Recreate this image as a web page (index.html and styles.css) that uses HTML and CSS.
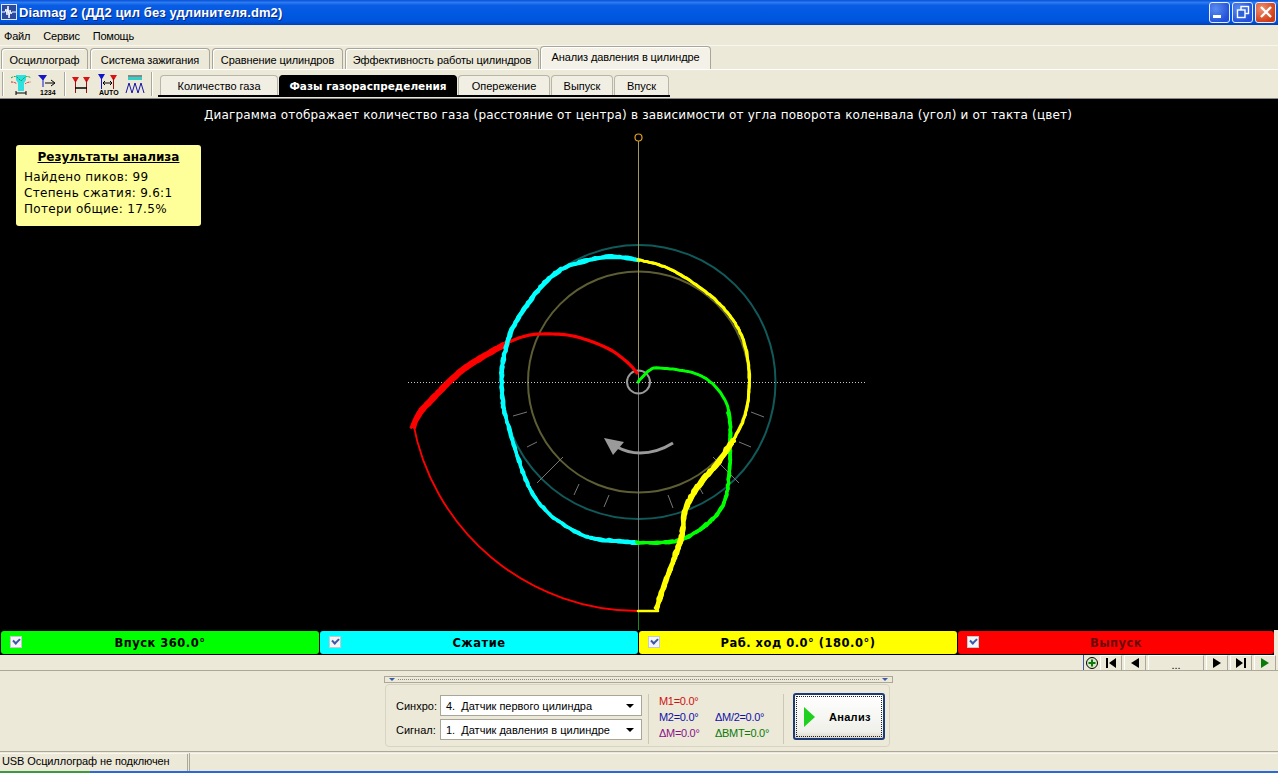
FILE: index.html
```html
<!DOCTYPE html>
<html lang="ru">
<head>
    <meta charset="UTF-8">
    <title>Diamag 2</title>
    <link rel="stylesheet" href="styles.css">
</head>
<body>

<div class="title-bar">
    <svg class="app-icon" width="16" height="16" viewBox="0 0 16 16">
        <rect x="0.5" y="0.5" width="15" height="15" fill="#2a4aa0" stroke="#dfe6ff"/>
        <path d="M1 8h3l1-3 1 6 1-9 1 12 1-8 1 4 1-2h4" fill="none" stroke="#fff"/>
    </svg>
    <span class="title-text">Diamag 2 (ДД2 цил без удлинителя.dm2)</span>
    <div class="win-buttons">
        <div class="win-btn"><span class="min-glyph"></span></div>
        <div class="win-btn">
            <svg width="14" height="14" viewBox="0 0 14 14" fill="none" stroke="#fff" stroke-width="1.4">
                <rect x="5" y="1.5" width="7.5" height="7"/>
                <rect x="1.5" y="5" width="7.5" height="7.5" fill="#2b62dc"/>
            </svg>
        </div>
        <div class="win-btn close">
            <svg width="14" height="14" viewBox="0 0 14 14" stroke="#fff" stroke-width="2.4">
                <path d="M2 2l10 10M12 2L2 12"/>
            </svg>
        </div>
    </div>
</div>

<div class="menu-bar">
    <span>Файл</span>
    <span>Сервис</span>
    <span>Помощь</span>
</div>

<div class="main-tabs">
    <div class="tab">Осциллограф</div>
    <div class="tab">Система зажигания</div>
    <div class="tab">Сравнение цилиндров</div>
    <div class="tab">Эффективность работы цилиндров</div>
    <div class="tab active">Анализ давления в цилиндре</div>
</div>

<div class="sub-row">
    <div class="toolbar">
        <span class="sep"></span>
        <svg class="tool-icon first" width="22" height="24" viewBox="0 0 22 24">
            <path d="M6 3h10v5l-2 3v8H8v-8L6 8z" fill="#2fe0e0"/>
            <path d="M1 6q4-3 7 0l3 3 3-3q3-3 7 0" fill="none" stroke="#1a9a3a" stroke-dasharray="2 1"/>
            <path d="M1 10q4 0 6 2M15 12q2-2 6-2" fill="none" stroke="#d02020" stroke-dasharray="2 1"/>
            <path d="M6 21h10M6 19v4M16 19v4" stroke="#000" fill="none"/>
        </svg>
        <svg class="tool-icon" width="20" height="24" viewBox="0 0 20 24">
            <path d="M0 3h9L5.500 8H4.500z" fill="#1414c8"/>
            <path d="M5 7v8" stroke="#1414c8"/>
            <path d="M7 11h9M13 8l4 3-4 3" fill="none" stroke="#000"/>
            <text class="icon-text" x="2" y="23">1234</text>
        </svg>
        <span class="sep"></span>
        <svg class="tool-icon" width="20" height="24" viewBox="0 0 20 24">
            <path d="M1 5h7L5 10H4zM12 5h7l-3 5h-1z" fill="#d81414"/>
            <path d="M4.500 8v13M15.500 8v13" stroke="#a01010"/>
            <path d="M4 16h12" stroke="#000" stroke-width="1.500"/>
        </svg>
        <svg class="tool-icon" width="22" height="24" viewBox="0 0 22 24">
            <path d="M1 2h7L5 7H4z" fill="#1414c8"/>
            <path d="M13 3h7l-3 5h-1z" fill="#d81414"/>
            <path d="M4.500 5v12" stroke="#1414c8"/>
            <path d="M16.500 6v11" stroke="#a01010"/>
            <path d="M6 11h9M8 9l-2 2 2 2M13 9l2 2-2 2" fill="none" stroke="#000"/>
            <text class="icon-text" x="2" y="23">AUTO</text>
        </svg>
        <svg class="tool-icon" width="20" height="24" viewBox="0 0 20 24">
            <rect x="3" y="3" width="14" height="2" fill="#888"/>
            <rect x="3" y="5" width="14" height="3" fill="#2fd0c8"/>
            <path d="M1 21l3-10 3 10 3-10 3 10 3-10 3 10" fill="none" stroke="#1414a8"/>
        </svg>
        <span class="sep"></span>
    </div>
    <div class="sub-tabs">
        <div class="sub-tab">Количество газа</div>
        <div class="sub-tab active">Фазы газораспределения</div>
        <div class="sub-tab">Опережение</div>
        <div class="sub-tab">Выпуск</div>
        <div class="sub-tab">Впуск</div>
    </div>
</div>

<div class="plot">
    <p class="plot-title">Диаграмма отображает количество газа (расстояние от центра) в зависимости от угла поворота коленвала (угол) и от такта (цвет)</p>
    <svg id="chart" class="chart" viewBox="0 98 1278 532" width="1278" height="532">
        <circle cx="638.500" cy="382" r="137" fill="none" stroke="#115a5a" stroke-width="2"/>
        <circle cx="638.500" cy="382" r="110.500" fill="none" stroke="#5e5e34" stroke-width="2"/>
        <line x1="638.500" y1="141" x2="638.500" y2="382" stroke="#9a9a62"/>
        <line x1="638.500" y1="382" x2="638.500" y2="611" stroke="#777"/>
        <line x1="638.500" y1="611" x2="638.500" y2="630" stroke="#1a8a1a"/>
        <line x1="408" y1="382.500" x2="867" y2="382.500" stroke="#c8c8c8" stroke-dasharray="1 2"/>
        <circle cx="638.500" cy="137.500" r="3.500" fill="none" stroke="#e0a020" stroke-width="1.200"/>
        <circle cx="638.500" cy="382" r="11.500" fill="none" stroke="#9a9a9a" stroke-width="2"/>
        <g id="ticks" stroke="#777"></g>
        <path d="M638.500 611A229 229 0 0 1 413 422" fill="none" stroke="#ff0000" stroke-width="1.800"/>
        <g id="traces" fill="none" stroke-linejoin="round" stroke-linecap="round"></g>
        <path d="M673 443Q657 453 640 453Q628 453 617 447" fill="none" stroke="#9a9a9a" stroke-width="3"/>
        <path d="M604 438L624 442L613 455z" fill="#9a9a9a"/>
    </svg>
    <div class="results">
        <div class="results-head">Результаты анализа</div>
        <div>Найдено пиков: 99</div>
        <div>Степень сжатия: 9.6:1</div>
        <div>Потери общие: 17.5%</div>
    </div>
</div>

<div class="legend">
    <div class="legend-item green"><span class="check"></span>Впуск 360.0°</div>
    <div class="legend-item cyan"><span class="check"></span>Сжатие</div>
    <div class="legend-item yellow"><span class="check"></span>Раб. ход 0.0° (180.0°)</div>
    <div class="legend-item red"><span class="check"></span><span class="dim">Выпуск</span></div>
</div>

<div class="nav-row">
    <div class="nav-add">
        <svg width="14" height="14" viewBox="0 0 14 14">
            <circle cx="7" cy="7" r="5.500" fill="#d8e8c8" stroke="#000"/>
            <path d="M7 3.500v7M3.500 7h7" stroke="#0a7a0a" stroke-width="2"/>
        </svg>
    </div>
    <div class="nav-btn"><svg width="12" height="10" viewBox="0 0 12 10"><path d="M1 0h2v10H1zM11 0v10L4 5z"/></svg></div>
    <div class="nav-btn"><svg width="10" height="10" viewBox="0 0 10 10"><path d="M9 0v10L1 5z"/></svg></div>
    <div class="nav-btn wide">...</div>
    <div class="nav-btn"><svg width="10" height="10" viewBox="0 0 10 10"><path d="M1 0v10l8-5z"/></svg></div>
    <div class="nav-btn"><svg width="12" height="10" viewBox="0 0 12 10"><path d="M1 0v10l7-5zM9 0h2v10H9z"/></svg></div>
    <div class="nav-btn"><svg width="10" height="10" viewBox="0 0 10 10"><path d="M1 0v10l8-5z" fill="#0a7a0a"/></svg></div>
</div>

<div class="bottom">
    <div class="splitter">
        <span class="split-arrow"></span>
        <span class="split-dots"></span>
        <span class="split-arrow"></span>
    </div>
    <div class="panel">
        <div class="selects">
            <div class="select-row">
                <label>Синхро:</label>
                <div class="select">4.&nbsp; Датчик первого цилиндра<span class="drop"></span></div>
            </div>
            <div class="select-row">
                <label>Сигнал:</label>
                <div class="select">1.&nbsp; Датчик давления в цилиндре<span class="drop"></span></div>
            </div>
        </div>
        <div class="markers">
            <span class="m-red">M1=0.0°</span><span></span>
            <span class="m-blue">M2=0.0°</span><span class="m-blue">ΔM/2=0.0°</span>
            <span class="m-purple">ΔM=0.0°</span><span class="m-green">ΔBMT=0.0°</span>
        </div>
        <div class="run-box">
            <div class="run-btn">
                <svg width="12" height="20" viewBox="0 0 12 20"><path d="M0 0l11 10L0 20z" fill="#20d020"/></svg>
                <span>Анализ</span>
            </div>
        </div>
    </div>
</div>

<div class="status-bar">
    <div class="status-cell first">USB Осциллограф не подключен</div>
    <div class="status-cell"></div>
</div>
<div class="taskbar"><span class="start"></span></div>

<script src="chart.js"></script>
</body>
</html>
```

FILE: styles.css
```css
* {
    box-sizing: border-box;
}

html, body {
    margin: 0;
    padding: 0;
}

body {
    width: 1278px;
    height: 773px;
    overflow: hidden;
    display: flex;
    flex-direction: column;
    background-color: #ece9d8;
    font-family: "Liberation Sans", Arial, sans-serif;
    font-size: 11px;
    color: #000;
}

/* window title */
.title-bar {
    height: 25px;
    display: flex;
    align-items: center;
    padding: 0 2px 1px 1px;
    background: linear-gradient(180deg, #0a50d8 0%, #2a7af0 10%, #0a5ce4 22%, #0058e0 60%, #0054dc 85%, #0040b8 100%);
}

.app-icon {
    margin-right: 2px;
}

.title-text {
    color: #fff;
    font-family: "Liberation Sans", sans-serif;
    font-weight: bold;
    font-size: 13px;
    letter-spacing: 0.1px;
    text-shadow: 1px 1px 0 #0a2a88;
}

.win-buttons {
    margin-left: auto;
    display: flex;
    gap: 2px;
}

.win-btn {
    width: 21px;
    height: 21px;
    display: flex;
    align-items: center;
    justify-content: center;
    border: 1px solid #e8eeff;
    border-radius: 3px;
    background: radial-gradient(circle at 30% 30%, #5a8cf0, #2250d8 75%);
}

.win-btn.close {
    background: radial-gradient(circle at 30% 30%, #f09070, #d03c14 75%);
}

.min-glyph {
    width: 8px;
    height: 3px;
    margin: 8px 6px 0 0;
    background-color: #fff;
}

.menu-bar {
    height: 21px;
    display: flex;
    align-items: center;
    gap: 13px;
    padding: 1px 0 0 4px;
    border-bottom: 1px solid #f8f6ee;
    letter-spacing: -0.2px;
}

/* main tabs */
.main-tabs {
    height: 23px;
    display: grid;
    grid-template-columns: 87px 120px 131px 194px 170px;
    column-gap: 2px;
    padding-left: 1px;
    align-items: end;
    letter-spacing: -0.1px;
}

.tab {
    height: 22px;
    display: flex;
    align-items: center;
    justify-content: center;
    background-color: #ece9d8;
    border: 1px solid #a8a698;
    border-bottom: none;
    border-radius: 4px 4px 0 0;
    box-shadow: inset 1px 1px 0 #fff;
}

.tab.active {
    height: 24px;
    margin-left: -1px;
    background-color: #f4f2e8;
    padding-bottom: 3px;
}

.sub-row {
    height: 29px;
    display: flex;
    border-top: 1px solid #fff;
}

.toolbar {
    width: 158px;
    display: flex;
    align-items: center;
    padding-left: 2px;
}

.tool-icon {
    margin-right: 6px;
}

.tool-icon.first {
    margin: 0 6px 0 0;
}

.sep {
    width: 2px;
    height: 24px;
    margin-right: 5px;
    border-left: 1px solid #aca899;
    border-right: 1px solid #fff;
}

.toolbar .sep:first-child {
    margin-right: 6px;
}

.icon-text {
    font-family: "Liberation Sans", sans-serif;
    font-size: 7px;
    font-weight: bold;
}

.sub-tabs {
    align-self: flex-start;
    margin-top: 5px;
    width: 512px;
    height: 22px;
    display: grid;
    grid-template-columns: 118px 178px 92px 62px 55px;
    column-gap: 1px;
    padding-left: 2px;
    border-bottom: 2px solid #000;
}

.sub-tab {
    display: flex;
    align-items: center;
    justify-content: center;
    padding-top: 1px;
    background-color: #f1efe4;
    border: 1px solid #b8b6a8;
    border-bottom: none;
    border-radius: 4px 4px 0 0;
}

.sub-tab.active {
    background-color: #000;
    border-color: #000;
    color: #fff;
    font-weight: bold;
    font-family: "DejaVu Sans", sans-serif;
    font-size: 10.500px;
}

/* plot */
.plot {
    position: relative;
    height: 532px;
    background-color: #000;
    border-top: 1px solid #888;
}

.plot-title {
    position: absolute;
    top: 9px;
    left: 0;
    width: 100%;
    margin: 0;
    padding-right: 2px;
    text-align: center;
    color: #fff;
    font-family: "DejaVu Sans", sans-serif;
    font-size: 12px;
    letter-spacing: 0.18px;
    white-space: nowrap;
}

.chart {
    position: absolute;
    top: -1px;
    left: 0;
}

.results {
    position: absolute;
    top: 46px;
    left: 16px;
    width: 185px;
    height: 81px;
    padding: 4px 8px;
    background-color: #ffff99;
    border-radius: 3px;
    font-family: "DejaVu Sans", sans-serif;
    font-size: 12px;
    letter-spacing: 0.3px;
    line-height: 16px;
}

.results-head {
    margin-bottom: 4px;
    text-align: center;
    font-weight: bold;
    letter-spacing: 0;
    text-decoration: underline;
}

/* legend */
.legend {
    width: 1274px;
    height: 25px;
    display: grid;
    grid-template-columns: 319px 319px 319px 317px;
    padding: 1px 0;
    background-color: #000;
    font-family: "DejaVu Sans", sans-serif;
    font-weight: bold;
    font-size: 11.500px;
    letter-spacing: 0.5px;
}

.legend-item {
    position: relative;
    display: flex;
    align-items: center;
    justify-content: center;
    margin-left: 1px;
    border-radius: 3px;
}

.green { background-color: #00ff00; }
.cyan { background-color: #00ffff; }
.yellow { background-color: #ffff00; }
.red { background-color: #ff0000; }

.dim {
    color: #6a0a0a;
}

.check {
    position: absolute;
    left: 9px;
    top: 5px;
    width: 12px;
    height: 12px;
    background-color: #f4f4f4;
    border: 1px solid #c4c8d0;
}

.check::after {
    content: "";
    position: absolute;
    left: 2px;
    top: 1px;
    width: 5px;
    height: 3px;
    border-left: 2px solid #3a5aa8;
    border-bottom: 2px solid #3a5aa8;
    transform: rotate(-45deg);
}

/* nav row */
.nav-row {
    height: 16px;
    display: flex;
    justify-content: flex-end;
    gap: 2px;
    padding-right: 2px;
    border-bottom: 1px solid #aca899;
}

.nav-add {
    width: 16px;
    display: flex;
    align-items: center;
    justify-content: center;
    border-left: 1px solid #3a5aa8;
    margin-right: -1px;
}

.nav-btn {
    width: 22px;
    height: 15px;
    display: flex;
    align-items: center;
    justify-content: center;
    border-top: 1px solid #fff;
    border-left: 1px solid #fff;
    border-right: 1px solid #aca899;
    line-height: 10px;
}

.nav-btn.wide {
    width: 56px;
    padding-top: 3px;
}

/* bottom panel */
.bottom {
    height: 79px;
    display: flex;
    flex-direction: column;
    align-items: center;
    padding-top: 5px;
}

.splitter {
    width: 509px;
    height: 7px;
    margin-left: -1px;
    display: flex;
    align-items: center;
    gap: 3px;
    padding: 0 4px;
    border: 1px solid #aca899;
}

.split-arrow {
    width: 0;
    height: 0;
    border-left: 3px solid transparent;
    border-right: 3px solid transparent;
    border-top: 3px solid #3a5aa8;
}

.split-dots {
    flex: 1;
    border-top: 1px dotted #888;
}

.panel {
    width: 505px;
    height: 63px;
    margin: 1px 0 0 -3px;
    display: flex;
    align-items: center;
    padding-left: 10px;
    border: 1px solid #d8d4c4;
    border-radius: 4px;
}

.selects {
    width: 252px;
    display: flex;
    flex-direction: column;
    gap: 3px;
    margin-top: 4px;
    padding-right: 6px;
}

.select-row {
    display: flex;
    align-items: center;
    justify-content: space-between;
}

.select {
    position: relative;
    width: 202px;
    height: 21px;
    padding: 1px 0 0 5px;
    line-height: 18px;
    background-color: #fff;
    border: 1px solid #a8a698;
    white-space: nowrap;
}

.drop {
    position: absolute;
    top: 8px;
    right: 7px;
    width: 0;
    height: 0;
    border-left: 4px solid transparent;
    border-right: 4px solid transparent;
    border-top: 4px solid #000;
}

.markers {
    width: 136px;
    height: 50px;
    margin-top: 6px;
    display: grid;
    grid-template-columns: 56px auto;
    grid-auto-rows: 16px;
    align-content: center;
    padding-left: 10px;
    border-left: 1px solid #ccc8b8;
    border-right: 1px solid #ccc8b8;
    letter-spacing: -0.3px;
    white-space: nowrap;
}

.m-red { color: #d01010; }
.m-blue { color: #1010a8; }
.m-purple { color: #8a108a; }
.m-green { color: #0a7a0a; }

.run-box {
    padding-left: 9px;
    margin-top: 2px;
}

.run-btn {
    width: 92px;
    height: 47px;
    display: flex;
    align-items: center;
    gap: 13px;
    padding-left: 9px;
    background: linear-gradient(180deg, #fff, #f0f0ea 85%, #dcd8cc);
    border: 2px solid #1c3a78;
    border-radius: 3px;
    outline: 1px dotted #222;
    outline-offset: -4px;
    font-weight: bold;
    letter-spacing: 0.3px;
}

.status-bar {
    height: 20px;
    display: flex;
    border-top: 1px solid #aca899;
    margin-top: 1px;
    letter-spacing: -0.1px;
}

.status-cell {
    flex: 1;
    margin-top: 1px;
    padding: 1px 0 0 2px;
    border-top: 1px solid #f8f6ee;
}

.status-cell.first {
    flex: none;
    width: 190px;
    border-right: 3px double #aca899;
}

.taskbar {
    flex: 1;
    background-color: #2a6ad8;
}

.start {
    display: block;
    width: 90px;
    height: 100%;
    background-color: #3c9a40;
}
```

FILE: chart.js
```js
// Traces are in page coordinates, same as the svg viewBox
var NS = 'http://www.w3.org/2000/svg';

var traces = [
    { color: '#ff0000', width: 3, passes: 4, spread: 1.8, noise: 0.3, points: [[413,426],[420,412],[433,398],[457,374],[480,358],[507,343]] },
    { color: '#ff0000', width: 3.2, passes: 1, spread: 0, noise: 0, points: [[490,351],[507,343],[522,337],[540,334],[573,336],[607,348],[627,362],[637,373]] },
    { color: '#00ffff', width: 3, passes: 3, spread: 1.2, noise: 0.6, points: [[638,260],[607,257],[567,267],[545,283],[524,310],[512,330],[505,353],[502,373],[503,400],[505,413],[515,447],[525,477],[537,500],[557,520],[587,537],[613,541],[638,543]] },
    { color: '#00ff00', width: 3, passes: 3, spread: 1.2, noise: 0.7, points: [[638,543],[667,543],[690,537],[713,520],[725,503],[730,477],[731,443],[731,425],[729,412]] },
    { color: '#00ff00', width: 3, passes: 1, spread: 0, noise: 0.2, points: [[731,440],[729,412],[722,395],[708,380],[690,372],[660,368],[650,370],[638,382]] },
    { color: '#ffff00', width: 2.8, passes: 2, spread: 0.6, noise: 0.4, points: [[638,260],[667,268],[700,288],[723,308],[740,333],[748,363],[748,397],[743,420],[733,440]] },
    { color: '#ffff00', width: 3.2, passes: 4, spread: 1.2, noise: 0.7, points: [[733,440],[717,463],[697,487],[685,510],[681,537],[673,560],[663,587],[656,609]] },
    { color: '#ffff00', width: 2.5, passes: 1, spread: 0, noise: 0, points: [[658,611],[638,611]] }
];

var ticks = [
    [563,457,537,483],[713,457,739,483],[527,412,513,416],[537,442,527,447],
    [579,484,574,495],[609,495,604,507],[668,495,673,508],[698,485,703,494],
    [739,442,751,447],[751,412,764,417]
];

// Small fixed generator so every load gives the same picture
var seed = 7;
function rnd() {
    seed = (seed * 16807) % 2147483647;
    return seed / 2147483647 - 0.5;
}

// Catmull-Rom through the points, sampled every few pixels
function sample(points) {
    var out = [];
    for (var i = 0; i < points.length - 1; i++) {
        var p0 = points[Math.max(i - 1, 0)];
        var p1 = points[i];
        var p2 = points[i + 1];
        var p3 = points[Math.min(i + 2, points.length - 1)];
        var steps = Math.ceil(Math.hypot(p2[0] - p1[0], p2[1] - p1[1]) / 3);
        for (var s = 0; s < steps; s++) {
            var t = s / steps;
            out.push([0, 1].map(function(k) {
                return 0.5 * (2 * p1[k] + (p2[k] - p0[k]) * t +
                    (2 * p0[k] - 5 * p1[k] + 4 * p2[k] - p3[k]) * t * t +
                    (3 * p1[k] - p0[k] - 3 * p2[k] + p3[k]) * t * t * t);
            }));
        }
    }
    out.push(points[points.length - 1]);
    return out;
}

function drawTrace(trace) {
    var line = sample(trace.points);
    for (var pass = 0; pass < trace.passes; pass++) {
        var ox = rnd() * trace.spread * 2;
        var oy = rnd() * trace.spread * 2;
        var d = line.map(function(p, i) {
            var x = p[0] + ox + rnd() * trace.noise * 2;
            var y = p[1] + oy + rnd() * trace.noise * 2;
            return (i ? 'L' : 'M') + x.toFixed(1) + ' ' + y.toFixed(1);
        }).join('');
        var path = document.createElementNS(NS, 'path');
        path.setAttribute('d', d);
        path.setAttribute('stroke', trace.color);
        path.setAttribute('stroke-width', trace.width);
        document.getElementById('traces').appendChild(path);
    }
}

ticks.forEach(function(t) {
    var line = document.createElementNS(NS, 'line');
    line.setAttribute('x1', t[0]);
    line.setAttribute('y1', t[1]);
    line.setAttribute('x2', t[2]);
    line.setAttribute('y2', t[3]);
    document.getElementById('ticks').appendChild(line);
});

traces.forEach(drawTrace);
```
